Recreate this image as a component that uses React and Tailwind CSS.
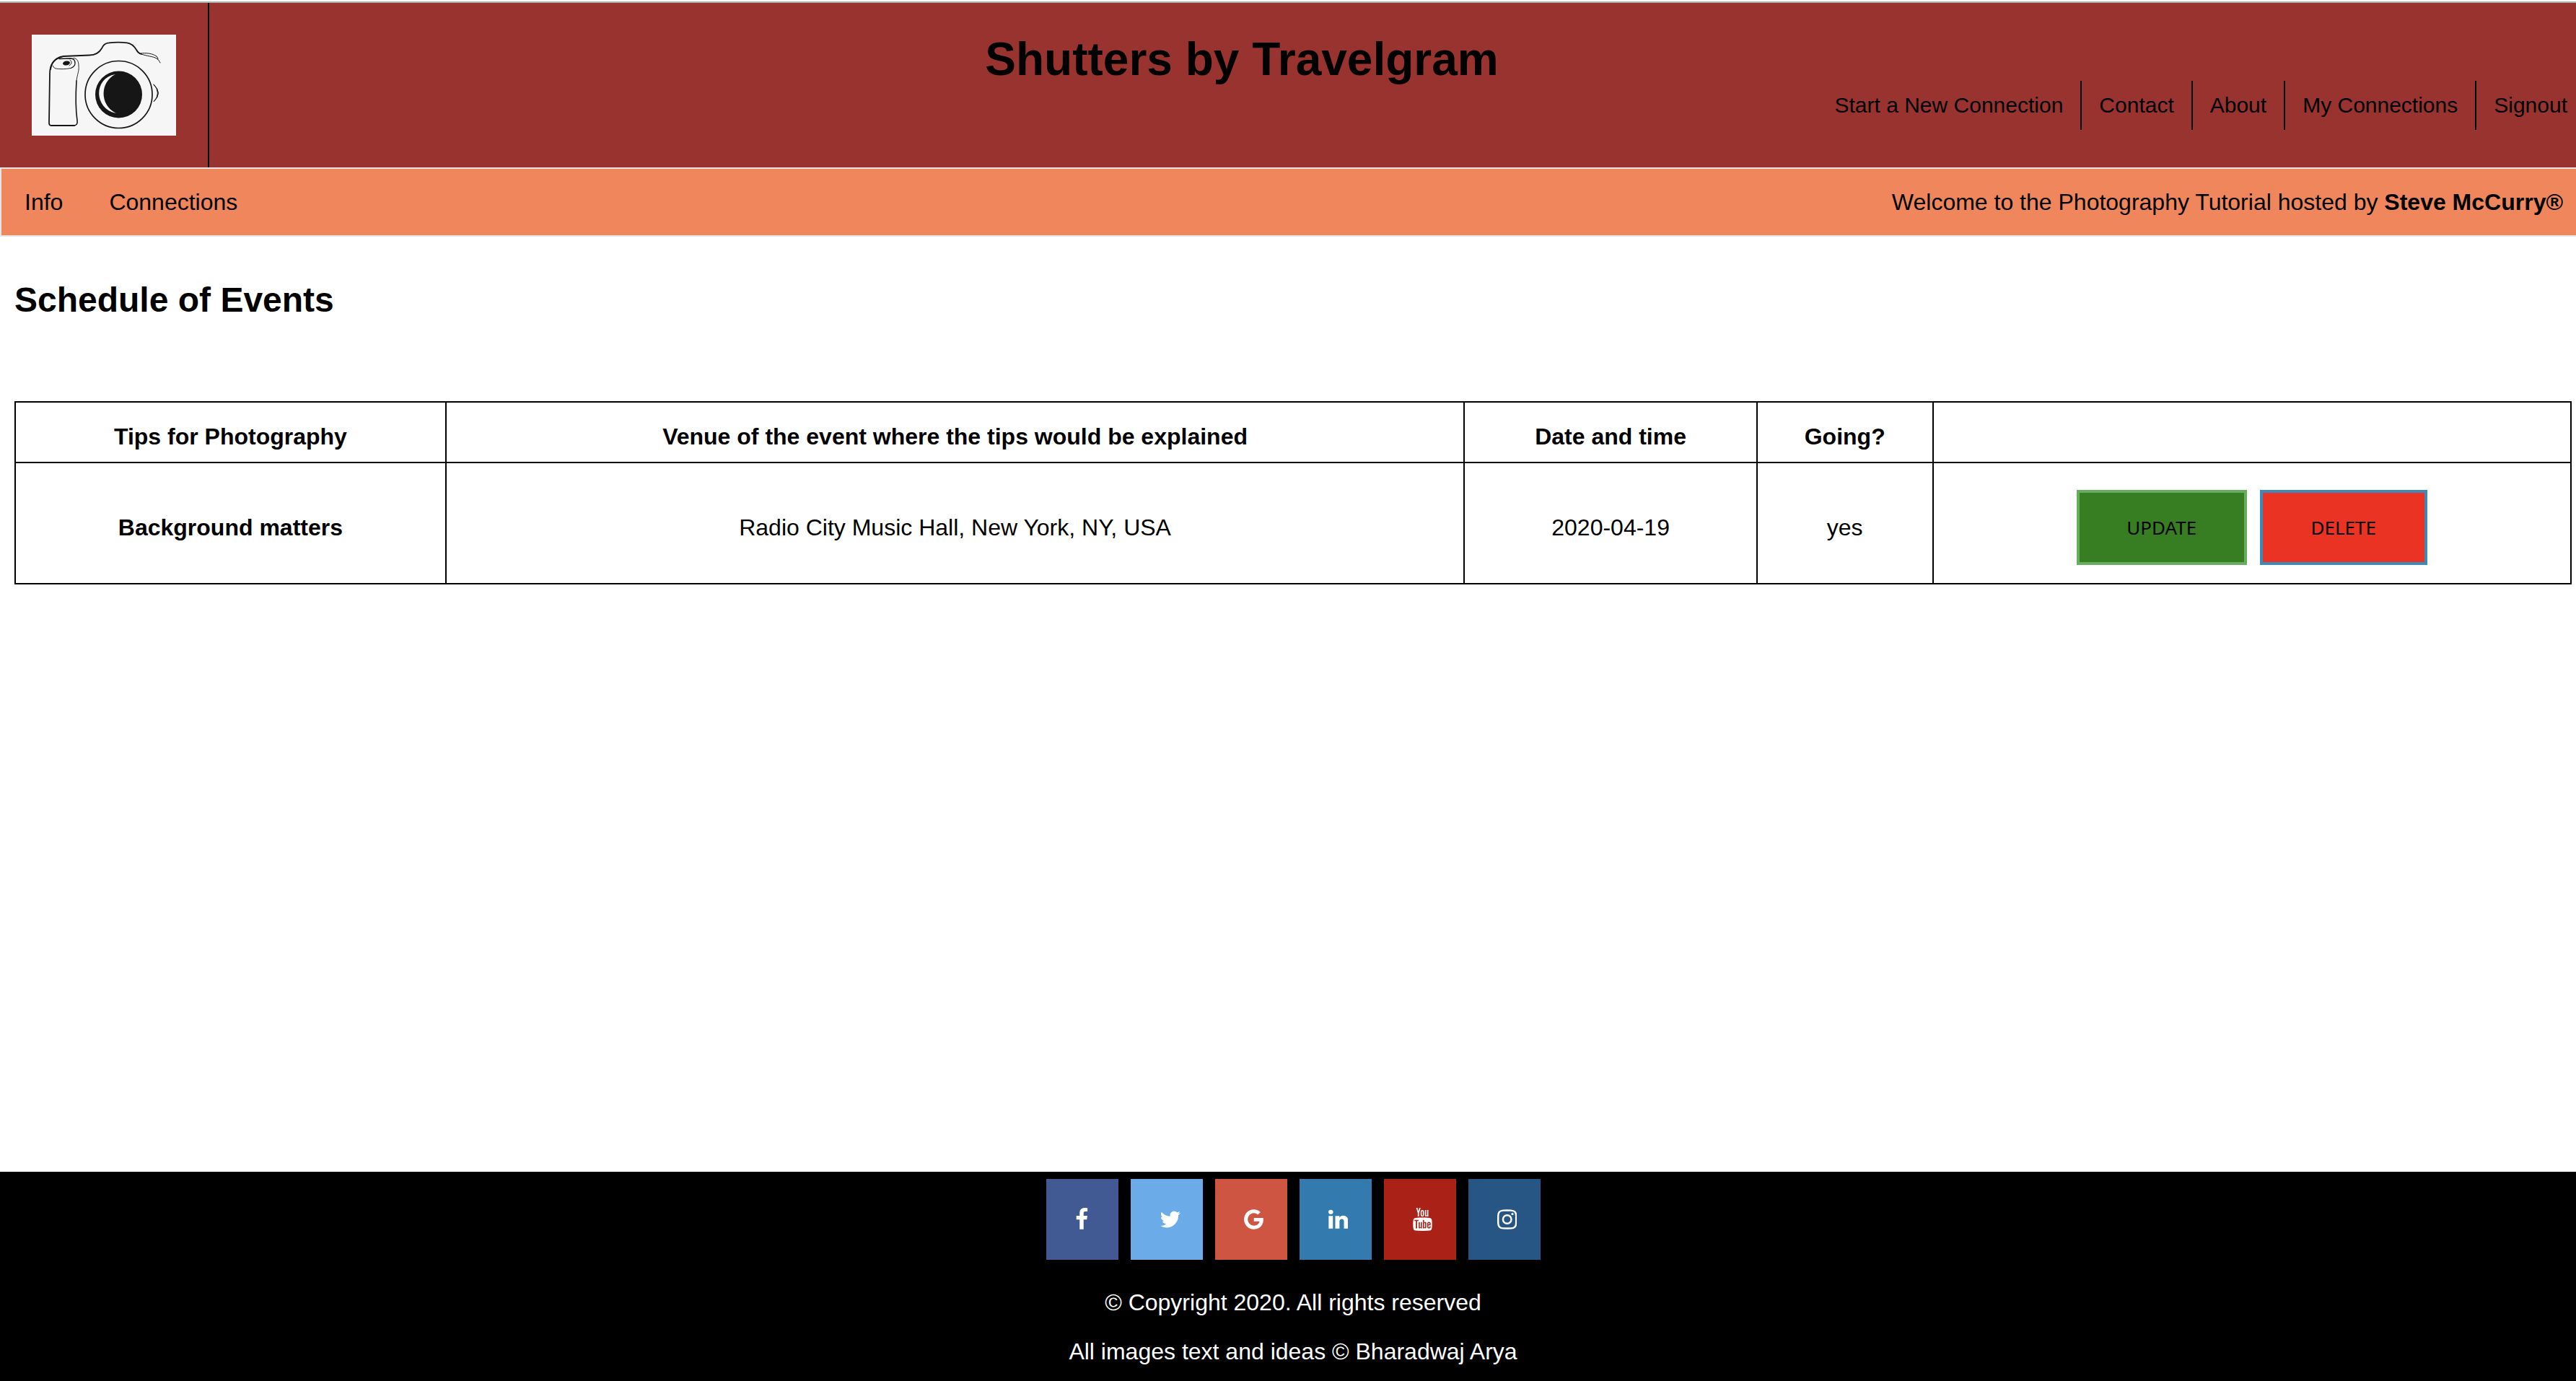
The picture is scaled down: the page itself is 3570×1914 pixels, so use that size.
import { TfiYoutube } from "react-icons/tfi";

const navLinks = ["Start a New Connection", "Contact", "About", "My Connections", "Signout"];

const glyphs = {
  facebook: {
    viewBox: "384 0 1024 1792",
    d: "M1343 12v264h-157q-86 0-116 36t-30 108v189h293l-39 296h-254v759h-306v-759h-255v-296h255v-218q0-186 104-288.5t277-102.5q147 0 228 12z",
  },
  twitter: {
    viewBox: "64 0 1664 1792",
    d: "M1684 408q-67 98-162 167 1 14 1 42 0 130-38 259.5t-115.5 248.5-184.5 210.5-258 146-323 54.5q-271 0-496-145 35 4 78 4 225 0 401-138-105-2-188-64.5t-114-159.5q33 5 61 5 43 0 85-11-112-23-185.5-111.5t-73.5-205.5v-4q68 38 146 41-66-44-105-115t-39-154q0-88 44-163 121 149 294.5 238.5t371.5 99.5q-8-38-8-74 0-134 94.5-228.5t228.5-94.5q140 0 236 102 109-21 205-78-37 115-142 178 93-10 186-50z",
  },
  google: {
    viewBox: "128 0 1536 1792",
    d: "M896 786h725q12 67 12 128 0 217-91 387.5t-259.5 266.5-386.5 96q-157 0-299-60.5t-245-163.5-163.5-245-60.5-299 60.5-299 163.5-245 245-163.5 299-60.5q300 0 515 201l-209 201q-123-119-306-119-129 0-238.5 65t-173.5 176.5-64 243.5 64 243.5 173.5 176.5 238.5 65q87 0 160-24t120-60 82-82 51.5-87 22.5-78h-436v-264z",
  },
  linkedin: {
    viewBox: "128 0 1536 1792",
    d: "M477 625v991h-330v-991h330zm21-306q1 73-50.5 122t-135.5 49h-2q-82 0-132-49t-50-122q0-74 51.5-122.5t134.5-48.5 133 48.5 51 122.5zm1166 729v568h-329v-530q0-105-40.5-164.5t-126.5-59.5q-63 0-105.5 34.5t-63.5 85.5q-11 30-11 81v553h-329q2-399 2-647t-1-296l-1-48h329v144h-2q20-32 41-56t56.5-52 87-43.5 114.5-15.5q171 0 275 113.5t104 332.5z",
  },
  instagram: {
    viewBox: "128 0 1536 1792",
    d: "M1152 896q0-106-75-181t-181-75-181 75-75 181 75 181 181 75 181-75 75-181zm138 0q0 164-115 279t-279 115-279-115-115-279 115-279 279-115 279 115 115 279zm108-410q0 38-27 65t-65 27-65-27-27-65 27-65 65-27 65 27 27 65zm-502-220q-7 0-76.5-.5t-105.5 0-96.5 3-103 10-71.5 18.5q-50 20-88 58t-58 88q-11 29-18.5 71.5t-10 103-3 96.5 0 105.5.5 76.5-.5 76.5 0 105.5 3 96.5 10 103 18.5 71.5q20 50 58 88t88 58q29 11 71.5 18.5t103 10 96.5 3 105.5 0 76.5-.5 76.5.5 105.5 0 96.5-3 103-10 71.5-18.5q50-20 88-58t58-88q11-29 18.5-71.5t10-103 3-96.5 0-105.5-.5-76.5.5-76.5 0-105.5-3-96.5-10-103-18.5-71.5q-20-50-58-88t-88-58q-29-11-71.5-18.5t-103-10-96.5-3-105.5 0-76.5.5zm768 630q0 229-5 317-10 208-124 322t-322 124q-88 5-317 5t-317-5q-208-10-322-124t-124-322q-5-88-5-317t5-317q10-208 124-322t322-124q88-5 317-5t317 5q208 10 322 124t124 322q5 88 5 317z",
  },
};

function Glyph({ name }) {
  return (
    <svg viewBox={glyphs[name].viewBox} className="block h-8 w-auto" fill="currentColor" aria-hidden="true">
      <path d={glyphs[name].d} />
    </svg>
  );
}

const socials = [
  { label: "Facebook", color: "bg-[#415a93]", icon: <Glyph name="facebook" /> },
  { label: "Twitter", color: "bg-[#6aabe8]", icon: <Glyph name="twitter" /> },
  { label: "Google", color: "bg-[#cd5542]", icon: <Glyph name="google" /> },
  { label: "LinkedIn", color: "bg-[#337aaf]", icon: <Glyph name="linkedin" /> },
  {
    label: "YouTube",
    color: "bg-[#aa2117]",
    icon: <TfiYoutube viewBox="1.300 0 14.400 17" className="block h-8 w-[27px]" aria-hidden="true" />,
  },
  { label: "Instagram", color: "bg-[#275584]", icon: <Glyph name="instagram" /> },
];

function CameraLogo() {
  return (
    <svg viewBox="0 0 200 140" className="block h-[140px] w-[200px] bg-[#f6f6f6]" fill="none" stroke="#161616" strokeLinecap="round" role="img" aria-label="Camera">
      <path strokeWidth="1.8" d="M59 126H27Q24 126 24 122L25 54C25 42 31 32 44 30L80 28.500C87 28.500 93 26 97 19C99 14 102 11.500 107 11.300C116 10.500 124 10.500 132 11.300C138 12 142 16 145 21C147 25 149 26 152 27" />
      <path strokeWidth="1" d="M152 27C160 30 168 30 173 33C176 35 177 37 178 39M151 26C159 25 167 26 173 30Q175 32 175 34" />
      <path strokeWidth="1.6" d="M59 126Q64 125 63 119C61 105 61 80 62 64" />
      <path strokeWidth="0.9" d="M62 64C63 55 66 50 65 43C65 37 63 33 58 32.500" />
      <path strokeWidth="1.3" d="M38 33.500L54 33Q60 33 60 40Q60 44 54 46.500" />
      <path strokeWidth="0.9" d="M54 46.500C47 48 39 48 33 47Q30 46 29 43M53 35Q58 39 52 43" />
      <path strokeWidth="2" d="M26 48C27 40 32 33 41 31" />
      <ellipse cx="48" cy="39.500" rx="5" ry="3" fill="#161616" stroke="none" transform="rotate(-10 48 39.500)" />
      <circle cx="120.500" cy="83" r="46.500" strokeWidth="1.700" />
      <circle cx="120.500" cy="83" r="32.500" fill="#161616" stroke="none" />
      <path fill="#f6f6f6" stroke="none" d="M116 55C85 60 86 103 117 109C93 97 95 65 116 55Z" />
      <path fill="#161616" strokeWidth="0.900" d="M169 69Q182 81 169 93Q180 81 169 69Z" />
    </svg>
  );
}

function Cell({ children, as: Tag = "td", ...rest }) {
  return (
    <Tag className="border-2 border-black px-2 pt-3 text-center align-middle" {...rest}>
      {children}
    </Tag>
  );
}

export default function App() {
  return (
    <div className="flex min-h-screen flex-col bg-white pt-[2px] font-['Liberation_Sans',Arial,sans-serif] text-[32px] leading-9 text-black">
      <header className="flex border-t-2 border-[#b0b0b0] bg-[#993330]">
        <a href="#" className="shrink-0 border-r-2 border-black p-11">
          <CameraLogo />
        </a>
        <div className="flex grow flex-col pt-12">
          <h1 className="pr-[418px] text-center text-[64px] leading-[60px] font-bold">Shutters by Travelgram</h1>
          <nav aria-label="Main">
            <ul className="flex justify-end pr-3 text-[30px]">
              {navLinks.map((label) => (
                <li key={label} className="flex h-[68px] items-center border-r-2 border-black px-6 last:border-r-0 last:pr-0">
                  <a href="#">{label}</a>
                </li>
              ))}
            </ul>
          </nav>
        </div>
      </header>

      <div className="flex items-center justify-between border-y-2 border-l-2 border-[#e5e5e5] bg-[#f0865c] py-7">
        <nav aria-label="Section" className="flex">
          <a href="#" className="px-8">Info</a>
          <a href="#" className="px-8">Connections</a>
        </nav>
        <p className="pr-[18px]">
          Welcome to the Photography Tutorial hosted by <strong>Steve McCurry®</strong>
        </p>
      </div>

      <main className="grow pt-[60px] pr-[6px] pl-5">
        <h2 className="text-5xl leading-[56px] font-bold">Schedule of Events</h2>
        <table className="mt-28 w-full table-fixed border-collapse">
          <colgroup>
            <col className="w-[16.85%]" />
            <col className="w-[39.85%]" />
            <col className="w-[11.45%]" />
            <col className="w-[6.88%]" />
            <col className="w-[24.97%]" />
          </colgroup>
          <thead>
            <tr className="h-[84px]">
              <Cell as="th" scope="col">Tips for Photography</Cell>
              <Cell as="th" scope="col">Venue of the event where the tips would be explained</Cell>
              <Cell as="th" scope="col">Date and time</Cell>
              <Cell as="th" scope="col">Going?</Cell>
              <Cell />
            </tr>
          </thead>
          <tbody>
            <tr className="h-[168px]">
              <Cell as="th" scope="row">Background matters</Cell>
              <Cell>Radio City Music Hall, New York, NY, USA</Cell>
              <Cell>2020-04-19</Cell>
              <Cell>yes</Cell>
              <Cell>
                <div className="flex justify-center gap-[18px] font-['Noto_Sans',sans-serif] text-[26px]">
                  <button type="button" className="h-[104px] w-[236px] border-4 border-[#66ad5f] bg-[#377d22]">UPDATE</button>
                  <button type="button" className="h-[104px] w-[232px] border-4 border-[#3b8ab9] bg-[#eb3323]">DELETE</button>
                </div>
              </Cell>
            </tr>
          </tbody>
        </table>
      </main>

      <footer className="flex flex-col items-center bg-black pt-[10px] pb-[23px] pl-[14px] text-white">
        <div className="flex gap-[17px]">
          {socials.map(({ label, color, icon }) => (
            <a key={label} href="#" aria-label={label} className={`w-[100px] py-10 pl-10 ${color}`}>
              {icon}
            </a>
          ))}
        </div>
        <p className="mt-[41px]">© Copyright 2020. All rights reserved</p>
        <p className="mt-8">All images text and ideas © Bharadwaj Arya</p>
      </footer>
    </div>
  );
}
